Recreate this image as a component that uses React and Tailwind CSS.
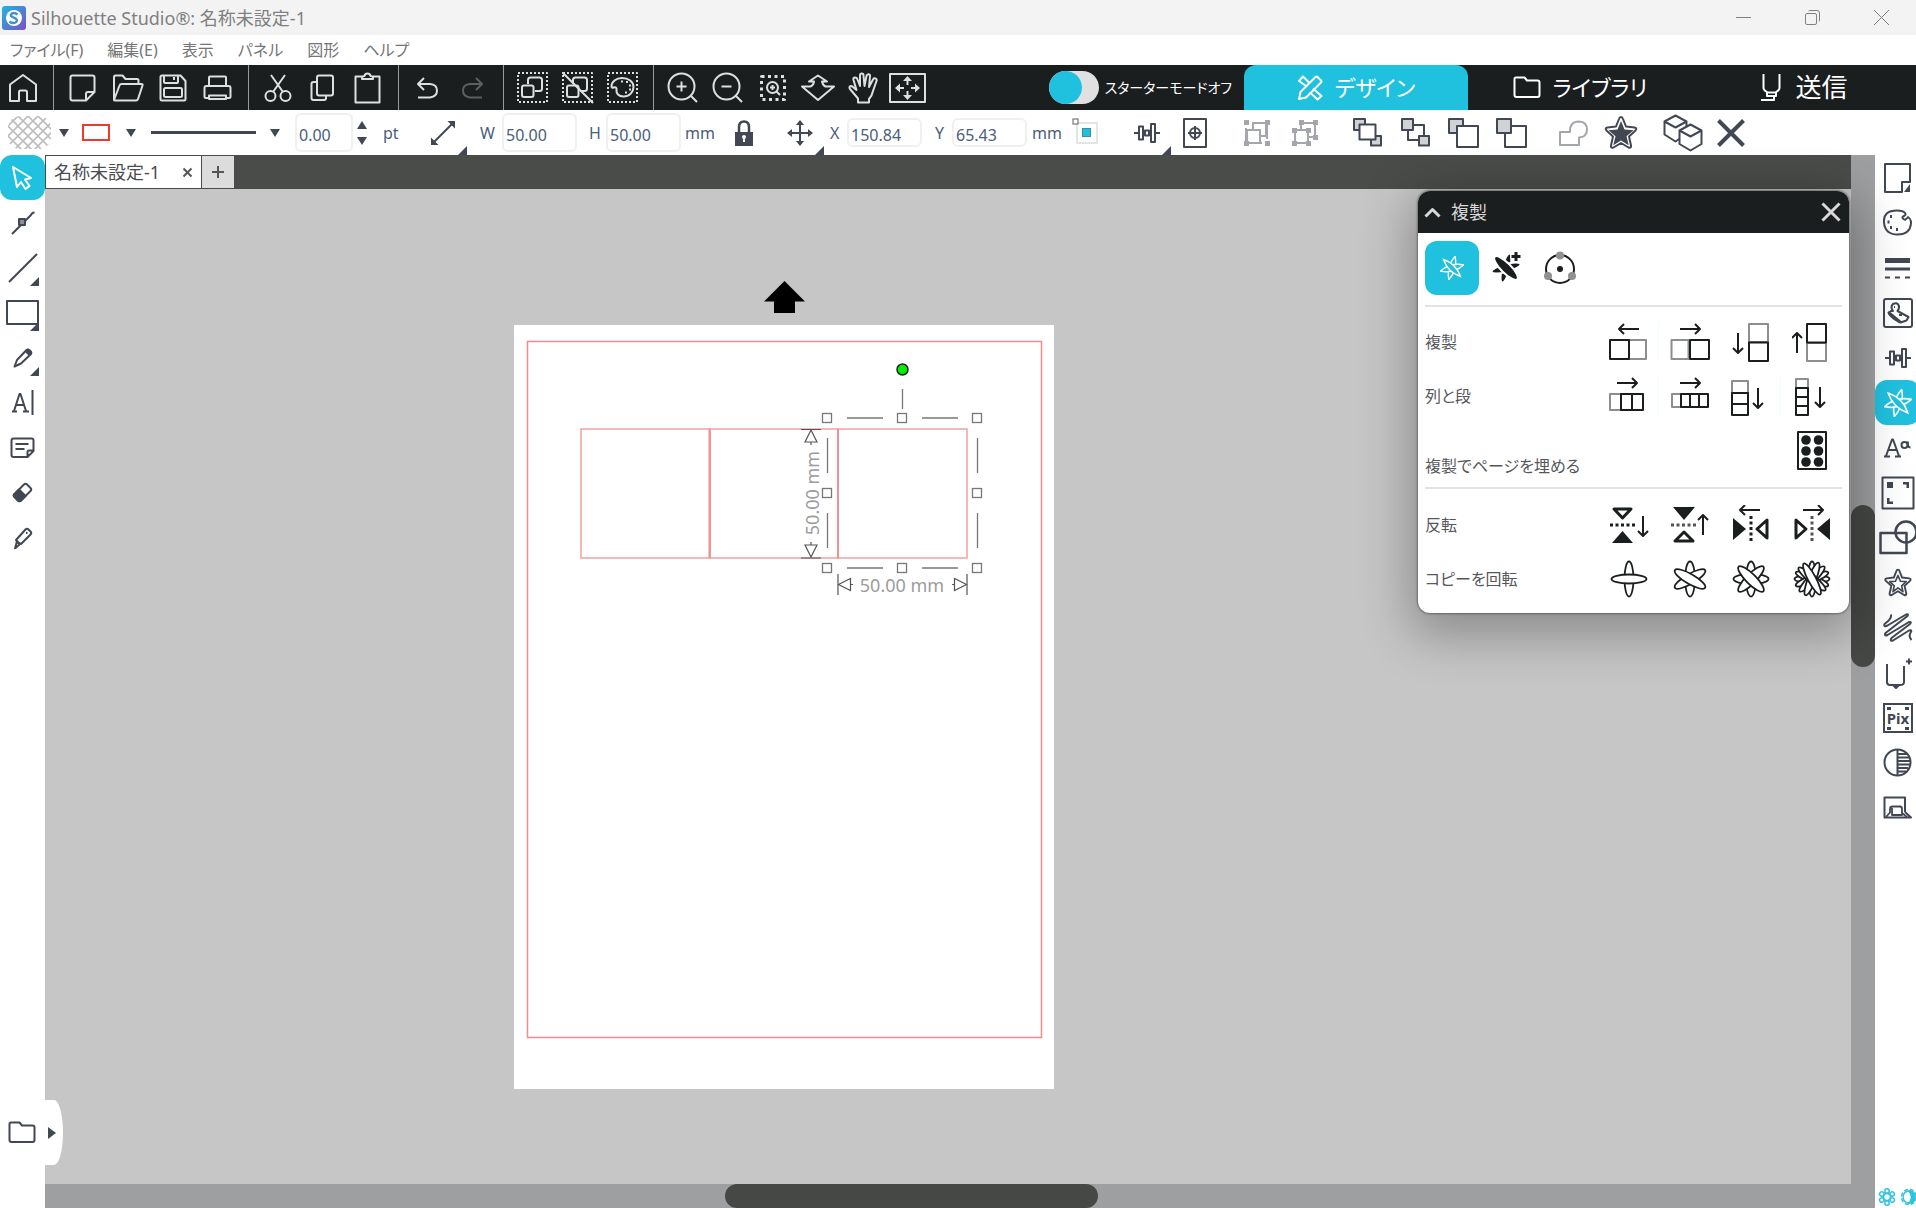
import { useState } from 'react';

const INK = '#414753';

function Icon({ w, h, sw = 2, children, className }) {
  return (
    <svg width={w} height={h} viewBox={`0 0 ${w} ${h}`} fill="none" stroke="currentColor" strokeWidth={sw}
      strokeLinejoin="round" className={`shrink-0 ${className || ''}`} aria-hidden="true">
      {children}
    </svg>
  );
}

// ---- main toolbar ----
const HomeIcon = () => <Icon w={28} h={28}><path d="M1 10.500 14 1l13 9.500V27h-9v-9q0-1.500-1.500-1.500h-5Q10 16.500 10 18v9H1z" /></Icon>;
const NewIcon = () => <Icon w={27} h={28}><path d="M3.500 1.500h20q2 0 2 2V18l-8.500 8.500H3.500q-2 0-2-2v-21q0-2 2-2zM25.500 18H19q-2 0-2 2v6.500" /></Icon>;
const OpenIcon = () => <Icon w={32} h={28}><path d="M2 26V3q0-1.500 1.500-1.500h7l3 3.500H25q1.500 0 1.500 1.500V10M2 26l5.500-14.500Q8 10 9.500 10h20q1.500 0 1 1.500L26 25q-.5 1.500-2 1.500H3Q2 26.500 2 26z" /></Icon>;
const SaveIcon = () => (
  <Icon w={28} h={28}>
    <path d="M3 1.500h18.500l5 5.500v18q0 1.500-1.500 1.500H3q-1.500 0-1.500-1.500V3Q1.500 1.500 3 1.500z" />
    <path d="M5 2v6q0 1 1 1h12q1 0 1-1V2M15 3v3" />
    <rect x="5" y="14" width="18" height="9" rx="1.500" />
  </Icon>
);
const PrintIcon = () => (
  <Icon w={29} h={26}>
    <path d="M6 11V2.500Q6 1.500 7 1.500h15q1 0 1 1V11M6 23H3q-1.500 0-1.500-1.500V13q0-2 2-2h22q2 0 2 2v8.500q0 1.500-1.500 1.500h-3" />
    <path d="M6 20.500h17V24H6z" />
  </Icon>
);
const CutIcon = () => (
  <Icon w={28} h={28}>
    <circle cx="6.500" cy="22" r="5" /><circle cx="21.500" cy="22" r="5" />
    <path d="M7 1l12 17M21 1 9 18" />
  </Icon>
);
const CopyIcon = () => <Icon w={25} h={28}><rect x="7" y="1.500" width="16" height="20" rx="2" /><path d="M7 8H3.500q-2 0-2 2v14q0 2 2 2H14q2 0 2-2v-2.500" /></Icon>;
const PasteIcon = () => <Icon w={27} h={32}><path d="M8 4.500H1.500v26h24v-26H19" /><path d="M8 7V5q1-1 2.500-1 .500-2.500 3-2.500t3 2.500Q18 4 19 5v2z" /></Icon>;
const UndoIcon = ({ className }) => <Icon w={23} h={22} className={className}><path d="M8 1 2 7l6 6M2 7h12q7 .5 7 6.500T14 20.500H2" /></Icon>;

const Dotted = ({ s }) => <rect x="1" y="1" width={s - 2} height={s - 2} strokeDasharray="2 2" />;
const GroupShapes = () => (
  <>
    <path d="M11 12V8q0-2.500 2.500-2.500h9Q25 5.500 25 8v8.500q0 2.500-2.500 2.500H18" />
    <rect x="5" y="13.500" width="11.500" height="11.500" rx="2" />
  </>
);
const PaletteShape = () => <path d="M15 6c-6 0-10.500 4-10.500 8.500 0 1 1 1.500 2 1 2-.8 3.500.2 3 2.500-.4 3.500 2 6.500 7 6.500 6 0 10-4.500 10-9.500C26.500 9.500 21.500 6 15 6z" />;
const SelectAllIcon = () => <Icon w={31} h={31}><Dotted s={31} /><GroupShapes /></Icon>;
const DeselectIcon = () => <Icon w={32} h={32}><Dotted s={31} /><GroupShapes /><path d="M0 0l31 31" /></Icon>;
const SelectColorIcon = () => (
  <Icon w={31} h={31}>
    <Dotted s={31} /><PaletteShape />
    <path d="M14 9.500h2M19 10h2M22 13.500h2M22 17.500h2M18 20.500h2" />
  </Icon>
);
const ZoomIcon = ({ plus }) => (
  <Icon w={31} h={31}>
    <circle cx="14.500" cy="14.500" r="13" /><path d="M24 24l6 6M9.500 14.500h10" />
    {plus && <path d="M14.500 9.500v10" />}
  </Icon>
);
const ZoomAreaIcon = () => (
  <Icon w={26} h={26}>
    <rect x="1.500" y="1.500" width="23" height="23" strokeWidth="3" strokeDasharray="3 3.500" />
    <circle cx="12.500" cy="12.500" r="5.500" /><path d="M16.500 16.500l3.500 3.500M10 12.500h5M12.500 10v5" />
  </Icon>
);
const DragZoomIcon = () => <Icon w={36} h={28}><path d="M18 1.500l9 6h-5q1 4 3.500 5H34L18 26 2 12.500h8.500q3-1 3.500-5H9z" /></Icon>;
const HandIcon = () => (
  <Icon w={30} h={32}>
    <path d="M10 30.500v-4L2 17q-1.500-2.500 1-3 1.500 0 3 2l2.500 2L5.500 8Q5 5.500 7 5.500T9.500 7.500L12 14V3.500Q12 1.500 13.800 1.500T15.500 3.500L16.500 14 18.500 4Q19 2 20.700 2.300T22 4.500L21 15l4-7.500q1.200-2 2.700-1T28.500 9L25 19q-1 5-4 8v3.500z" />
  </Icon>
);
const FitIcon = () => (
  <Icon w={37} h={30}>
    <rect x="1" y="1" width="35" height="28" />
    <path d="M18.500 5v7M18.500 18v7M7 15h8M22 15h8" />
    <g fill="currentColor" stroke="none"><path d="M18.500 3l4.500 5h-9zM18.500 27l4.500-5h-9zM6 15l5-4.500v9zM31 15l-5-4.500v9z" /></g>
  </Icon>
);

const toolGroups = [
  [['ホーム', <HomeIcon />]],
  [['新規', <NewIcon />], ['開く', <OpenIcon />], ['保存', <SaveIcon />], ['印刷', <PrintIcon />]],
  [['切り取り', <CutIcon />], ['コピー', <CopyIcon />], ['貼り付け', <PasteIcon />]],
  [['元に戻す', <UndoIcon />], ['やり直し', <UndoIcon className="-scale-x-100 text-[#5d5f60]" />]],
  [['すべて選択', <SelectAllIcon />], ['選択解除', <DeselectIcon />], ['色で選択', <SelectColorIcon />]],
  [['拡大', <ZoomIcon plus />], ['縮小', <ZoomIcon />], ['範囲ズーム', <ZoomAreaIcon />], ['ドラッグズーム', <DragZoomIcon />], ['移動', <HandIcon />], ['全体表示', <FitIcon />]],
];

const DesignIcon = () => (
  <Icon w={26} h={26}>
    <path d="M2 24l1.500-7L18.500 2q1-1 2 0L24 5.500q1 1 0 2L9 22.500z" />
    <path d="M9 11L2 6l4-4.500L12.500 8M16 13.500l8.500 7.500-4 3.500-7.500-7" />
  </Icon>
);
const FolderIcon = () => <Icon w={28} h={23}><path d="M3 1.500h8.500l2.500 3h10.500q2 0 2 2V19q0 2-2 2H3.500q-2 0-2-2V3Q1.500 1.500 3 1.500z" /></Icon>;
const SendIcon = () => <Icon w={23} h={28}><path d="M3.500 0v14q0 2 2 3l2 1.500h8l2-1.500q2-1 2-3V0M7 18.500v3.500h9v-3.500M14 22v4H1" /></Icon>;

// ---- options bar ----
const Caret = () => <Icon w={10} h={10} className="text-[#414753]"><path d="M0 1h10L5 9z" fill="currentColor" stroke="none" /></Icon>;
const Corner = () => <Icon w={9} h={9} className="absolute right-0 bottom-0"><path d="M9 0v9H0z" fill="currentColor" stroke="none" /></Icon>;

const AlignIcon = () => (
  <Icon w={26} h={20}>
    <path d="M0 10h5M9 10h2M15 10h2M21 10h5" />
    <rect x="5" y="3.500" width="4" height="13" /><rect x="11" y="7.500" width="4" height="5" /><rect x="17" y="1" width="4" height="18" />
  </Icon>
);
const CenterPageIcon = () => (
  <Icon w={24} h={30}>
    <rect x="1" y="1" width="22" height="28" /><circle cx="12" cy="15" r="5" /><path d="M12 8v14M5 15h14" />
  </Icon>
);
const GroupIcon = () => (
  <Icon w={28} h={28}>
    <path d="M9 4h14M24 5v15M3 9v14M16 17h7V4M10 10V4M4 24h15" strokeWidth="2" />
    <rect x="4" y="11" width="13" height="13" />
    <g fill="currentColor" stroke="none"><path d="M1 1h5v5H1zM22 1h5v5h-5zM1 22h5v5H1zM22 22h5v5h-5z" /></g>
  </Icon>
);
const UngroupIcon = () => (
  <Icon w={28} h={28}>
    <rect x="10" y="4" width="14" height="14" /><rect x="4" y="11" width="13" height="13" fill="white" />
    <g fill="currentColor" stroke="none"><path d="M8 1h5v5H8zM22 1h5v5h-5zM22 16h5v5h-5zM1 9h5v5H1zM15 9h5v5h-5zM1 22h5v5H1zM15 22h5v5h-5z" /></g>
  </Icon>
);
const FrontIcon = () => (
  <Icon w={29} h={29} sw={2}>
    <path d="M1 1h11v11H1zM18 18h10v9.500H18z" fill="#d0d2d5" /><rect x="6.500" y="6.500" width="16" height="15" fill="white" />
  </Icon>
);
const BackIcon = () => (
  <Icon w={29} h={29}>
    <path d="M7 7h16v15H7z" /><path d="M1 1h11v11H1zM18 18h10v9.500H18z" fill="#d0d2d5" />
  </Icon>
);
const ForwardIcon = () => <Icon w={31} h={30}><path d="M1 1h14v14H1z" fill="#d0d2d5" /><path d="M9 8h21v21H9z" fill="white" /></Icon>;
const BackwardIcon = () => <Icon w={31} h={30}><path d="M9 8h21v21H9z" fill="white" /><path d="M1 1h14v14H1z" fill="#d0d2d5" /></Icon>;
const WeldIcon = () => <Icon w={29} h={26}><path d="M1 12h10q-.5-10.500 9-10.500 8 .5 8 8t-8 8V25H1z" /></Icon>;
const starPath = 'M18 2q1.500 0 2 2l3 7.500 8.500 1q3 .5 1 3L26 21.500l2 9q.500 3-2.500 2L18 28l-7.500 4.500q-3 1-2.500-2l2-9-6.500-6q-2-2.500 1-3l8.500-1L16 4q.5-2 2-2z';
const OffsetIcon = () => <Icon w={36} h={36}><path d={starPath} /><path d="M18 6l3.500 8.500 9 .8-7 6 2.200 9L18 25.500l-7.700 4.800 2.200-9-7-6 9-.8z" fill="currentColor" stroke="none" /></Icon>;
const BoxesIcon = () => (
  <Icon w={40} h={38}>
    <path d="M12.500 1.500l11 6V20l-11 7.500-11-7V7.500zM1.500 7.500l11 6 11-6M12.500 13" />
    <path d="M27.500 10.500l11 6V30l-11 6.500-11-6.500V16.500z" fill="white" /><path d="M16.500 16.500l11 6 11-6" />
  </Icon>
);
const CloseIcon = ({ s, sw }) => <Icon w={s} h={s} sw={sw}><path d={`M1.500 1.500L${s - 1.5} ${s - 1.5}M${s - 1.5} 1.500L1.500 ${s - 1.5}`} /></Icon>;

const optionGroups = [
  [['グループ化', <GroupIcon />, true], ['グループ解除', <UngroupIcon />, true]],
  [['最前面へ', <FrontIcon />], ['最背面へ', <BackIcon />], ['前面へ', <ForwardIcon />], ['背面へ', <BackwardIcon />]],
  [['溶接', <WeldIcon />, true], ['オフセット', <OffsetIcon />]],
  [['3D', <BoxesIcon />], ['削除', <CloseIcon s={28} sw={4} />]],
];

// ---- side bars ----
const lens = 'M-14 0Q0-7 14 0 0 7-14 0z';
const ReplicateIcon = ({ s = 28 }) => (
  <svg width={s} height={s} viewBox="-14 -14 28 28" fill="#20c1df" stroke="white" strokeWidth="1.600" className="shrink-0" aria-hidden="true">
    {[-75, -15, 45].map((a) => <path key={a} d={lens} transform={`rotate(${a})`} />)}
  </svg>
);

const leftTools = [
  ['選択', <Icon w={24} h={26}><path d="M2 2l18 11-6 1.500 4.500 6.500-4 3-4.500-7L6 22z" /></Icon>],
  ['点編集', <Icon w={24} h={24}><path d="M1 23L20 4q1-2.500 3.500-2.500" /><rect x="8" y="8" width="6" height="6" fill="#8a8e95" /></Icon>],
  ['線', <Icon w={30} h={30}><path d="M1 29L29 1" /></Icon>, true],
  ['長方形', <Icon w={33} h={25}><rect x="1" y="1" width="31" height="23" /></Icon>, true],
  ['鉛筆', <Icon w={20} h={20}><path d="M1.500 18.500L4 12 13.500 2q1.500-1 3.500.5t1 3.500L8 15.500z" /><path d="M13 2l4.500 4.500" strokeWidth="4" /></Icon>, true],
  ['テキスト', <Icon w={22} h={26}><path d="M2 21L7.500 4h1L14 21M4 15h8M0 21.500h5M11 21.500h6" /><path d="M20.500 0v25" /></Icon>],
  ['メモ', <Icon w={25} h={22}><path d="M3.500 1.500h18q2 0 2 2v10.500l-6 6h-14q-2 0-2-2V3.500q0-2 2-2zM23.500 13.500H19q-1.500 0-1.500 1.500v5M5.500 7h13M5.500 12h9" /></Icon>],
  ['消しゴム', <Icon w={21} h={21}><path d="M2.500 12L12 2.500q1.500-1.500 3 0L18.500 6q1.500 1.500 0 3L9 18.500q-1.500 1.500-3 0L2.500 15q-1.500-1.500 0-3z" /><path d="M7 7.500l6.500 6.500L9 18.500q-1.500 1.500-3 0L2.500 15q-1.500-1.500 0-3z" fill="currentColor" /></Icon>],
  ['ナイフ', <Icon w={20} h={22}><path d="M5 16L3 13 12.500 2.500q1.500-1.500 3 0l2 2q1.500 1.500 0 3L8 17z" /><path d="M4 14l3 3-5 4.500zM13 6h1.500" /></Icon>],
];

const rightTools = [
  ['ページ設定', <Icon w={27} h={30}><path d="M1 1h25v18h-8v10H1z" /><path d="M26 21v8h-6z" fill="currentColor" stroke="none" /></Icon>],
  ['塗りつぶし', <Icon w={29} h={27}><path d="M25 8q3.500 2 3 6.500-1 11-13.500 11T1 13.500 14 1.500q6 0 8 2.500 1.500 2-1 3t-1 2.500 2.500 1T25 8z" /><path d="M7 7.500h2M4.500 13h2M7 18.500h2M13 20.500h2" strokeWidth="3" /></Icon>],
  ['線スタイル', <Icon w={27} h={22}><path d="M1 3.500h25" strokeWidth="5" /><path d="M1 12h25" strokeWidth="3" /><path d="M1 20.500h25" strokeDasharray="5 5" /></Icon>],
  ['トレース', <Icon w={30} h={30}><rect x="1" y="1" width="28" height="28" rx="2" /><path d="M10 13q-3-4 0-7 4-2 5.500 1t-1 6l11 6-2 3.500-6 2Q8 20 5.500 14.500L8 13z" /><path d="M6 15l11 9" strokeWidth="3" /><path d="M11 9h1M16 17h3" /></Icon>],
  ['整列', <AlignIcon />],
  ['複製', <ReplicateIcon />],
  ['テキスト スタイル', <Icon w={27} h={21}><path d="M2 19L8 2.500h1L15 19M4.500 13h8M0 19.500h6M11 19.500h6" /><circle cx="20.500" cy="8" r="3" /><path d="M24 4.500q-1 6 2.500 6" /></Icon>],
  ['レジストレーション', <Icon w={34} h={34} className="ml-px"><rect x="1.500" y="1.500" width="31" height="31" /><path d="M6 6h6v6H6zM22 6h6v6h-2.500V8.500H22zM6 22h2.500v3.500H12V28H6z" fill="currentColor" stroke="none" /></Icon>],
  ['モディファイ', <Icon w={38} h={36} sw={2.5}><circle cx="27" cy="12" r="10.500" /><rect x="1.500" y="13" width="26" height="20" /></Icon>],
  ['オフセット', <Icon w={30} h={30}><g transform="scale(.83)"><path d={starPath} strokeWidth="2.300" /><path d="M18 9l3 7 7 .5-5.500 5 1.500 7L18 24l-6 4.500 1.500-7L8 16.500l7-.5z" /></g></Icon>],
  ['スケッチ', <Icon w={30} h={30}><path d="M8 1.500Q9 6 1.500 11q-1 3.500 3 1.500L23 1.500q3-1 1.500 1.500L2.500 20q-1.500 3.500 2 2L26 9q3-.5 1 2L8.500 25q-2 3.500 1.500 2.500L26 17.500q3-1 2 1.500-3 4 .5 8" /></Icon>],
  ['ナイフ設定', <Icon w={27} h={32} className="ml-0.5"><path d="M2 7v18q0 3 3 3h10q4 0 4-3V9M21 4.500h6M24 1.500v6" /><path d="M8 28l3 3 3-3z" fill="currentColor" /></Icon>],
  ['Pix', <PixIcon />],
  ['コントラスト', <Icon w={29} h={29}><circle cx="14.500" cy="14.500" r="13" /><path d="M14.500 1.500v26" /><path d="M15 6h9M15 9.500h11M15 13h12M15 16.500h12M15 20h10M15 23.500h8" /></Icon>],
  ['ネスティング', <Icon w={30} h={24}><path d="M22 16V1.500H1.500v20H28L22 16" /><path d="M3 21l4-4.500V13q0-2.500 2.500-2.500H17q2 0 2 2.500v6H9V12M19 17l5 4" strokeWidth="1.800" /></Icon>],
];

function PixIcon() {
  return (
    <svg width="30" height="30" viewBox="0 0 30 30" fill="none" stroke="currentColor" strokeWidth="2" className="shrink-0">
      <rect x="1" y="1" width="28" height="28" />
      <path d="M4 5.500h4M22 5.500h4M4 25.500h4M22 25.500h4" strokeWidth="3" />
      <text x="15" y="21" textAnchor="middle" fill="currentColor" stroke="none" fontSize="15" fontWeight="700">Pix</text>
    </svg>
  );
}

// ---- replicate panel ----
const Arrow = ({ x, y, a }) => <path d="M-10 0H10M5-5l5 5-5 5" transform={`translate(${x} ${y}) rotate(${a})`} />;
const P = ({ children }) => <Icon w={40} h={40}>{children}</Icon>;

const Petals = ({ back, front, ry = 4.5 }) => (
  <svg width="38" height="38" viewBox="-19 -19 38 38" fill="white" stroke="currentColor" strokeWidth="1.800">
    {[...back, front].map((a) => <ellipse key={a} rx="17.500" ry={ry} transform={`rotate(${a})`} />)}
  </svg>
);

const panelRows = [
  {
    label: '複製', line: [0],
    icons: [
      <P><path d="M21 18h17v19H21z" stroke="#8c8e8f" /><path d="M2 18h19v19H2z" /><Arrow x={21} y={7} a={180} /></P>,
      <P><path d="M1.500 18h17v19h-17z" stroke="#8c8e8f" /><path d="M20 18h19v19H20z" /><Arrow x={20} y={7} a={0} /></P>,
      <P><path d="M18 2h19v18H18z" stroke="#8c8e8f" /><path d="M18 20.500h19V39H18z" /><Arrow x={7} y={21} a={90} /></P>,
      <P><path d="M15 21h19v18H15z" stroke="#8c8e8f" /><path d="M15 2h19v18.500H15z" /><Arrow x={5} y={21} a={-90} /></P>,
    ],
  },
  {
    label: '列と段', line: [0, 2],
    icons: [
      <P><path d="M2 18h11v16H2z" stroke="#8c8e8f" /><path d="M13 18h11v16H13zM24 18h11v16H24z" /><Arrow x={19} y={7} a={0} /></P>,
      <P><path d="M2 18h9v13H2z" stroke="#8c8e8f" /><path d="M11 18h9v13h-9zM20 18h9v13h-9zM29 18h9v13h-9z" /><Arrow x={20} y={7} a={0} /></P>,
      <P><path d="M2 5h16v12H2z" stroke="#8c8e8f" /><path d="M2 17h16v11H2zM2 28h16v11H2z" /><Arrow x={28} y={22} a={90} /></P>,
      <P><path d="M4 3h12v9H4z" stroke="#8c8e8f" /><path d="M4 12h12v9H4zM4 21h12v9H4zM4 30h12v9H4z" /><Arrow x={28} y={21} a={90} /></P>,
    ],
  },
  {
    label: '複製でページを埋める', low: true,
    icons: [
      <Icon w={30} h={39}>
        <rect x="1" y="1" width="28" height="37" />
        <g fill="currentColor" stroke="none">{[9, 20, 31].map((y) => <g key={y}><circle cx="9" cy={y} r="4.800" /><circle cx="21.500" cy={y} r="4.800" /></g>)}</g>
      </Icon>,
    ],
  },
  { divider: true },
  {
    label: '反転',
    icons: [
      <P><path d="M5 4h17l-8.500 9z" strokeWidth="3" /><path d="M3 38l10.500-12L24 38z" fill="currentColor" stroke="none" /><path d="M1 20h27" strokeWidth="3" strokeDasharray="3 2.500" /><Arrow x={34} y={21} a={90} /></P>,
      <P><path d="M3 2h22L14 15z" fill="currentColor" stroke="none" /><path d="M5 36h18l-9-9z" strokeWidth="3" /><path d="M1 20h27" strokeWidth="3" strokeDasharray="3 2.500" stroke="#555" /><Arrow x={33} y={20} a={-90} /></P>,
      <P><path d="M2 13l13 11L2 35z" fill="currentColor" stroke="none" /><path d="M36 15v18l-10-9z" strokeWidth="3" /><path d="M20 11v27" strokeWidth="3" strokeDasharray="3 2.500" /><Arrow x={19} y={5} a={180} /></P>,
      <P><path d="M4 15v18l10-9z" strokeWidth="3" /><path d="M38 13L25 24l13 11z" fill="currentColor" stroke="none" /><path d="M20 11v27" strokeWidth="3" strokeDasharray="3 2.500" stroke="#555" /><Arrow x={21} y={5} a={0} /></P>,
    ],
  },
  {
    label: 'コピーを回転',
    icons: [
      <Petals back={[90]} front={0} />,
      <Petals back={[90, -30]} front={30} ry={5} />,
      <Petals back={[0, 90, -45]} front={45} ry={5} />,
      <Petals back={[0, 90, 22, -22, -45, -68, 40]} front={62} ry={4} />,
    ],
  },
];

function DuplicatePanel() {
  return (
    <section className="absolute top-0.5 right-0.5 w-[431px] rounded-xl bg-white text-[#1b1e1f] shadow-[0_0_2px_1px_rgba(0,0,0,0.35),0_14px_50px_8px_rgba(0,0,0,0.3)]">
      <header className="flex h-[42px] items-center rounded-t-xl bg-[#1b1e1f] pr-2 pl-1.5 text-[#d8d8d8]">
        <button type="button" aria-label="折りたたむ"><Icon w={17} h={11} sw={3}><path d="M1.500 9.500l7-7 7 7" /></Icon></button>
        <h2 className="ml-2.5 text-lg">複製</h2>
        <button type="button" aria-label="閉じる" className="ml-auto"><CloseIcon s={20} sw={3} /></button>
      </header>
      <div className="px-[7px] pt-2 pb-[7px]">
        <div className="flex items-center border-b-2 border-[#e3e3e3] pb-2.5">
          <button type="button" aria-label="基本" className="flex size-[54px] items-center justify-center rounded-xl bg-[#20c1df]"><ReplicateIcon s={24} /></button>
          <button type="button" aria-label="詳細" className="flex size-[54px] items-center justify-center">
            <svg width="32" height="32" viewBox="-16 -16 32 32" fill="currentColor" stroke="white" strokeWidth="2">
              <ellipse rx="15" ry="4" transform="rotate(-75)" /><ellipse rx="15" ry="4" transform="rotate(-15)" />
              <ellipse rx="16" ry="5" transform="rotate(45)" />
              <circle cx="10" cy="-11" r="6" fill="white" stroke="none" />
              <path d="M10-16v9M5.500-11.500h9" stroke="currentColor" strokeWidth="3" />
            </svg>
          </button>
          <button type="button" aria-label="円形" className="flex size-[54px] items-center justify-center">
            <Icon w={34} h={34}>
              <circle cx="17" cy="18" r="14" /><circle cx="17" cy="18" r="3" fill="currentColor" stroke="none" />
              <g fill="#8f9192" stroke="none"><circle cx="17" cy="4.500" r="4" /><circle cx="5" cy="25" r="4" /><circle cx="29" cy="25" r="4" /></g>
            </Icon>
          </button>
        </div>
        <div className="pt-2">
          {panelRows.map((row, i) =>
            row.divider ? (
              <hr key={i} className="mt-2.5 mb-[9px] border-t-2 border-[#e3e3e3]" />
            ) : (
              <div key={i} className="flex h-[54px] items-center justify-between">
                <span className={`text-base text-[#55575c] ${row.low ? 'pt-8' : ''}`}>{row.label}</span>
                <div className="flex h-full items-center">
                  {row.icons.map((icon, j) => (
                    <button key={j} type="button" aria-label={`${row.label} ${j + 1}`}
                      className={`flex h-10 w-[61px] items-center justify-center ${row.line?.includes(j) ? 'border-r border-cyan-50' : ''}`}>
                      {icon}
                    </button>
                  ))}
                </div>
              </div>
            )
          )}
        </div>
      </div>
    </section>
  );
}

// Artwork on the media page, 1 unit = 1 screen pixel
function Artwork() {
  const handles = [[313, 93], [388, 93], [463, 93], [313, 168], [463, 168], [313, 243], [388, 243], [463, 243]];
  return (
    <svg className="size-full" viewBox="0 0 540 764" fill="none">
      <rect x="13.500" y="16.500" width="514" height="696" stroke="#f38b8b" strokeWidth="1.500" />
      <g stroke="#f4a0a0" strokeWidth="1.500">
        <rect x="67" y="104" width="129" height="129" />
        <rect x="196" y="104" width="128" height="129" />
        <rect x="324" y="104" width="129" height="129" />
      </g>
      <path d="M195.500 104v129M324 104v129" stroke="#f09090" strokeWidth="2" />
      <g stroke="#777" strokeWidth="1.300">
        <path d="M333 93h36M408 93h36M333 243h36M408 243h36M313.500 113v35M313.500 188v35M463.500 113v35M463.500 188v35M388.500 64v20" />
        {handles.map(([x, y]) => <rect key={`${x}-${y}`} x={x - 4.5} y={y - 4.5} width="9" height="9" fill="white" />)}
      </g>
      <g stroke="#555" strokeWidth="1.200" fill="white">
        <path d="M287 104.500h20M287 233h20M297 117v3M297 217v3M324 249v21M453 249v21M336 259.500h3M438 259.500h3" />
        <path d="M297 105l6 12h-12zM297 232l6-12h-12zM324.500 259.500l12-6v12zM452.500 259.500l-12-6v12z" />
      </g>
      <g fill="#9c9c9c" fontSize="18" textAnchor="middle">
        <text x="388" y="267">50.00 mm</text>
        <text transform="translate(305 168) rotate(-90)">50.00 mm</text>
      </g>
      <circle cx="388.500" cy="44.500" r="5.500" fill="#00f000" stroke="#222" strokeWidth="1.500" />
    </svg>
  );
}

function Field({ label, value, tall, className }) {
  return (
    <label className={`flex items-center ${className}`}>
      <span className="flex-1">{label}</span>
      <input type="text" defaultValue={value}
        className={`w-[75px] rounded-md border-2 border-[#f0f0f0] bg-white pt-1 pl-0.5 ${tall ? 'h-[39px]' : 'h-[29px]'}`} />
    </label>
  );
}

export default function App() {
  const [starter, setStarter] = useState(false);

  return (
    <div className="flex h-screen flex-col overflow-hidden bg-white font-['Noto_Sans','Noto_Sans_CJK_JP',sans-serif] text-base [font-feature-settings:'palt']">
      <header className="flex h-[35px] shrink-0 items-center bg-[#f3f3f3] pl-0.5 text-[#808080]">
        <svg width="24" height="24" viewBox="0 0 24 24" aria-hidden="true">
          <defs>
            <linearGradient id="logo" x1="0" y1="0" x2="1" y2="1">
              <stop offset="0" stopColor="#1fb4e0" /><stop offset="1" stopColor="#7a50c8" />
            </linearGradient>
          </defs>
          <rect width="24" height="24" rx="3" fill="url(#logo)" />
          <circle cx="12" cy="12" r="8" fill="white" />
          <path d="M15.500 8.500q-3-2.500-5.500-1-2.500 2 .500 3.500l3 1.500q3 2 0 4-3 1.500-6-1" fill="none" stroke="#3f8fd6" strokeWidth="2.400" />
        </svg>
        <h1 className="ml-[5px] text-lg">Silhouette Studio®: 名称未設定-1</h1>
        <div className="ml-auto flex items-center">
          <button type="button" aria-label="最小化" className="flex w-[69px] justify-center"><Icon w={15} h={15} sw={1}><path d="M0 7.500h15" /></Icon></button>
          <button type="button" aria-label="元のサイズに戻す" className="flex w-[69px] justify-center"><Icon w={15} h={15} sw={1}><rect x=".5" y="3.500" width="11" height="11" rx="1.500" /><path d="M3.500 1Q4 .500 5 .500h7q2.500 0 2.500 2.500v7q0 1-.5 1.500" /></Icon></button>
          <button type="button" aria-label="閉じる" className="flex w-[69px] justify-center"><Icon w={15} h={15} sw={1}><path d="M0 0l15 15M15 0L0 15" /></Icon></button>
        </div>
      </header>

      <nav className="flex h-[30px] shrink-0 items-center gap-6 pl-2.5 text-base text-[#757575]">
        {['ファイル(F)', '編集(E)', '表示', 'パネル', '図形', 'ヘルプ'].map((m) => <button key={m} type="button">{m}</button>)}
      </nav>

      <div className="flex h-[45px] shrink-0 bg-[#1b1e1f] text-[#dedfdf]">
        {toolGroups.map((group, i) => (
          <div key={i} className={`flex ${i > 0 ? 'pl-1.5' : ''} ${i < toolGroups.length - 1 ? 'border-r border-[#9a9a9a] pr-2' : ''}`}>
            {group.map(([name, icon]) => (
              <button key={name} type="button" aria-label={name} className="flex w-[45px] items-center justify-center">{icon}</button>
            ))}
          </div>
        ))}
        <label className="mr-3 ml-auto flex items-center gap-1.5 text-sm text-white">
          <input type="checkbox" checked={starter} onChange={(e) => setStarter(e.target.checked)} className="peer sr-only" />
          <span className="flex h-[33px] w-[50px] rounded-full bg-[#e0e0e0] peer-checked:justify-end"><span className="size-[33px] rounded-full bg-[#20c1df]" /></span>
          スターターモードオフ
        </label>
        <button type="button" className="flex w-56 items-center justify-center gap-3 rounded-t-xl bg-[#20c1df] text-[22px] text-white"><DesignIcon />デザイン</button>
        <button type="button" className="flex w-56 items-center justify-center gap-3 text-[22px] text-white"><FolderIcon />ライブラリ</button>
        <button type="button" className="flex w-56 items-center justify-center gap-3 text-[26px] text-white"><SendIcon />送信</button>
      </div>

      <div className="flex h-[45px] shrink-0 items-center text-[#4a5d7a]">
        <button type="button" aria-label="塗りつぶしの色" className="ml-2 flex w-[61px] items-center justify-between">
          <svg width="43" height="33" aria-hidden="true">
            <defs>
              <pattern id="hatch" width="10" height="10" patternUnits="userSpaceOnUse"><path d="M0 0l10 10M10 0L0 10" stroke="#bdbdbd" strokeWidth="1.600" /></pattern>
            </defs>
            <rect width="43" height="33" rx="12" fill="url(#hatch)" />
          </svg>
          <Caret />
        </button>
        <button type="button" aria-label="線の色" className="ml-[13px] flex w-[54px] items-center justify-between">
          <span className="h-[17px] w-7 border-2 border-[#ec3b33]" /><Caret />
        </button>
        <button type="button" aria-label="線の種類" className="ml-[15px] flex w-[129px] items-center justify-between">
          <span className="h-[3px] w-[105px] bg-[#414753]" /><Caret />
        </button>
        <input type="text" aria-label="線の太さ" defaultValue="0.00" className="ml-[15px] h-[39px] w-[58px] rounded-md border-2 border-[#f0f0f0] pt-1 pl-0.5" />
        <div className="ml-1 flex flex-col gap-1.5">
          <button type="button" aria-label="増やす" className="rotate-180"><Caret /></button>
          <button type="button" aria-label="減らす"><Caret /></button>
        </div>
        <span className="ml-4 w-9">pt</span>
        <button type="button" aria-label="線の寸法" className="relative flex h-full w-12 items-center justify-center text-[#414753]">
          <Icon w={26} h={26}><path d="M2 24L24 2" /><path d="M17.500 1H25v7.500zM1 17.500V25h7.500z" fill="currentColor" stroke="none" /></Icon><Corner />
        </button>
        <Field label="W" value="50.00" tall className="ml-[13px] w-[97px]" />
        <Field label="H" value="50.00" tall className="ml-3 w-[92px]" />
        <span className="ml-1 w-[35px]">mm</span>
        <button type="button" aria-label="縦横比を固定" className="flex w-12 justify-center text-[#414753]">
          <Icon w={18} h={26}><path d="M4 13V7q0-5.500 5-5.500T14 7v6" strokeWidth="2.500" /><rect y="12" width="18" height="14" fill="currentColor" stroke="none" /><circle cx="9" cy="17" r="2" fill="white" stroke="none" /><path d="M9 17v5" stroke="white" /></Icon>
        </button>
        <button type="button" aria-label="移動" className="relative ml-2 flex h-full w-12 items-center justify-center text-[#414753]">
          <Icon w={26} h={26}><path d="M13 2v22M2 13h22" /><path d="M13 0l4 5H9zM13 26l4-5H9zM0 13l5-4v8zM26 13l-5-4v8z" fill="currentColor" stroke="none" /></Icon><Corner />
        </button>
        <Field label="X" value="150.84" className="ml-1.5 w-[92px]" />
        <Field label="Y" value="65.43" className="ml-[13px] w-[92px]" />
        <span className="ml-[5px] w-10">mm</span>
        <button type="button" aria-label="基準点" className="pb-1">
          <svg width="26" height="26" fill="none" aria-hidden="true">
            <rect x="5" y="5" width="20" height="20" stroke="#dcdcdc" strokeWidth="1.500" />
            <rect x="1" y="1" width="5" height="5" fill="white" stroke="#777" strokeWidth="1.200" />
            <rect x="10.500" y="10.500" width="8" height="8" fill="#20c1df" stroke="#3b8f9e" />
          </svg>
        </button>
        <div className="ml-[25px] flex h-full gap-3.5 text-[#414753]">
          <div className="flex">
            <button type="button" aria-label="整列" className="relative flex w-12 items-center justify-center"><AlignIcon /><Corner /></button>
            <button type="button" aria-label="ページの中央" className="flex w-12 items-center justify-center"><CenterPageIcon /></button>
          </div>
          {optionGroups.map((group, i) => (
            <div key={i} className="flex">
              {group.map(([name, icon, off]) => (
                <button key={name} type="button" aria-label={name} className={`flex w-12 items-center justify-center ${off ? 'text-[#a3a6ab]' : ''}`}>{icon}</button>
              ))}
            </div>
          ))}
        </div>
      </div>

      <div className="flex min-h-0 flex-1">
        <aside className="relative z-10 flex w-[45px] shrink-0 flex-col text-[#414753]">
          {leftTools.map(([name, icon, more], i) => (
            <button key={name} type="button" aria-label={name}
              className={`relative flex h-[45px] items-center justify-center ${i === 0 ? 'rounded-xl bg-[#20c1df] text-white' : ''}`}>
              {icon}
              {more && <span className="absolute right-1.5 bottom-1"><Icon w={9} h={9}><path d="M9 0v9H0z" fill={INK} stroke="none" /></Icon></span>}
            </button>
          ))}
          <button type="button" aria-label="ライブラリを開く" className="relative mt-auto mb-[43px] flex h-[65px] items-center pl-2">
            <FolderIcon />
            <span className="absolute left-[45px] flex h-[65px] w-[18px] items-center rounded-r-[100%] bg-white pl-[3px]">
              <Icon w={8} h={12}><path d="M0 0l8 6-8 6z" fill={INK} stroke="none" /></Icon>
            </span>
          </button>
        </aside>

        <main className="flex min-w-0 flex-1 flex-col">
          <div className="flex min-h-0 flex-1">
            <div className="flex min-w-0 flex-1 flex-col">
              <div className="flex h-[34px] shrink-0 border-y border-[#4a4c4a] bg-[#4a4c4a]">
                <div className="flex w-[157px] items-center justify-between border-x border-[#4a4c4a] bg-white pr-2 pl-2 text-lg text-[#4b4d52]">
                  名称未設定-1
                  <button type="button" aria-label="タブを閉じる" className="text-[#555]"><CloseIcon s={11} sw={2} /></button>
                </div>
                <button type="button" aria-label="新しいタブ" className="flex w-8 items-center justify-center bg-[#dcdcdc] text-[#555]"><Icon w={12} h={12}><path d="M6 0v12M0 6h12" /></Icon></button>
              </div>
              <div className="relative flex-1 bg-[#c6c6c6]">
                <svg className="absolute top-[92px] left-[719px]" width="41" height="32" aria-hidden="true"><path d="M20.500 0L41 20.500H31V32H10V20.500H0z" /></svg>
                <div className="absolute top-[136px] left-[469px] h-[764px] w-[540px] bg-white"><Artwork /></div>
                <DuplicatePanel />
              </div>
            </div>
            <div className="w-6 shrink-0 bg-[#9d9fa0] pt-[350px]"><div className="h-[162px] rounded-full bg-[#464846]" /></div>
          </div>
          <div className="h-6 shrink-0 bg-[#9d9fa0] pl-[680px]"><div className="h-6 w-[373px] rounded-full bg-[#464846]" /></div>
        </main>

        <aside className="flex w-[41px] shrink-0 flex-col overflow-hidden text-[#414753]">
          {rightTools.map(([name, icon], i) => (
            <button key={name} type="button" aria-label={name}
              className={`flex h-[45px] w-[45px] shrink-0 items-center justify-center ${i === 5 ? 'rounded-xl bg-[#20c1df]' : ''}`}>
              {icon}
            </button>
          ))}
          <div className="mt-auto flex gap-1 pb-0.5 pl-[3px] text-[#2fc3df]">
            <button type="button" aria-label="環境設定">
              <svg width="18" height="18" viewBox="-9 -9 18 18" fill="none" stroke="currentColor" strokeWidth="1.500">
                {[0, 60, 120, 180, 240, 300].map((a) => <circle key={a} cy="-6" r="2.200" transform={`rotate(${a})`} />)}
                <circle r="3.500" />
              </svg>
            </button>
            <button type="button" aria-label="テーマ">
              <svg width="18" height="18" viewBox="-9 -9 18 18" fill="none" stroke="currentColor" strokeWidth="1.500">
                <circle r="7.500" strokeDasharray="4 2" /><circle r="6" /><path d="M0-6q5 6 0 12 6 0 6-6T0-6z" fill="currentColor" />
              </svg>
            </button>
          </div>
        </aside>
      </div>
    </div>
  );
}
